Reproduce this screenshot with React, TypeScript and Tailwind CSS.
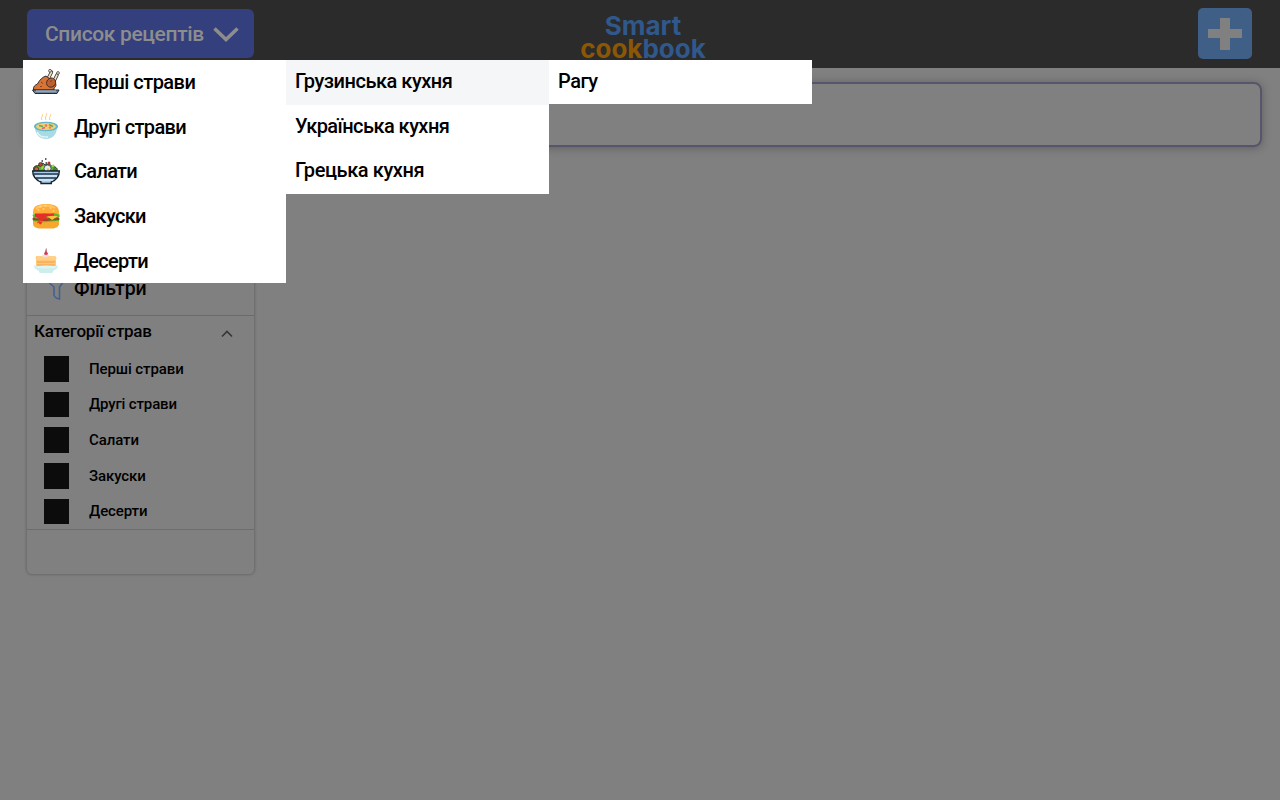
import React from "react";

const dishes = [
  { name: "Перші страви", icon: <Roast />, menu: "tracking-[-0.54px]", filter: "tracking-[-0.1px]" },
  { name: "Другі страви", icon: <Soup />, menu: "tracking-[-0.62px]", filter: "tracking-[-0.15px]" },
  { name: "Салати", icon: <Salad />, menu: "tracking-[-0.7px]", filter: "tracking-[-0.1px]" },
  { name: "Закуски", icon: <Burger />, menu: "tracking-[-0.68px]", filter: "tracking-[-0.1px]" },
  { name: "Десерти", icon: <Cake />, menu: "tracking-[-0.7px]", filter: "tracking-[-0.1px]" },
];
const cuisines = [
  { name: "Грузинська кухня", style: "bg-[#f5f6f8] tracking-[-0.47px]" },
  { name: "Українська кухня", style: "tracking-[-0.55px]" },
  { name: "Грецька кухня", style: "tracking-[-0.4px]" },
];

function Roast() {
  return (
    <svg viewBox="0 0 28 28" className="size-7">
      <path d="M16 11 19.500 4M22 13l3-6" stroke="#292c32" strokeWidth="3.4" strokeLinecap="round" />
      <path d="M16 11 19.500 4M22 13l3-6" stroke="#f0dfbb" strokeWidth="1.8" strokeLinecap="round" />
      <circle cx="18" cy="2.8" r="1.4" fill="#f6ead0" stroke="#292c32" strokeWidth=".7" />
      <circle cx="26" cy="5" r="1.4" fill="#f6ead0" stroke="#292c32" strokeWidth=".7" />
      <path d="M1.5 22c-.5-3.500 1.500-5 4-6 2-4 5-7 8.500-8l4 3 4 2c3 3 2 6 0 7v2Z" fill="#da7434" stroke="#392c2b" />
      <path d="M15 13c2-4 7-4 8.500 0 1 4-3 7-6 6-3-1-3.500-4-2.500-6Z" fill="#bc6030" stroke="#392c2b" />
      <path d="m9 14 2 1.500m-3 3h2m8-5 2-1" stroke="#733720" strokeWidth=".8" />
      <path d="M.5 22h26.500l-2 3.500H3Z" fill="#718499" stroke="#242b36" />
      <path d="M4 23h20" stroke="#b4c5d3" />
    </svg>
  );
}

function Soup() {
  return (
    <svg viewBox="0 0 28 28" className="size-7">
      <path d="M10 1c2 2-2 3 0 6m4-7c2 2-2 4 0 7m4-6c2 2-2 3 0 6" fill="none" stroke="#ffcb7b" />
      <path d="M3 14c0 8 5 12 11 12s11-4 11-12Z" fill="#a9dbe4" />
      <ellipse cx="14" cy="13.500" rx="12" ry="4.800" fill="#62b7c9" />
      <ellipse cx="14" cy="13.500" rx="10" ry="3.500" fill="#f3cf6e" />
      <path d="m7 12.500 4 1m6-2 4 2" stroke="#60a76b" strokeWidth="1.500" />
      <circle cx="14" cy="12.500" r="1.300" fill="#ee6f73" />
      <circle cx="18" cy="14.500" r="1.200" fill="#ef8060" />
      <path d="m10 15.500 3-1" stroke="#e45f72" strokeWidth="1.500" />
      <path d="M5 19c2 5 6 5 11 5" fill="none" stroke="#e4f5f7" strokeWidth="1.500" />
    </svg>
  );
}

function Salad() {
  return (
    <svg viewBox="0 0 28 28" className="size-7">
      <path d="M2 14c-2-4 2-6 4-5 2-3 5-4 7-1 3-2 7 0 7 2 3-1 6 1 5 4Z" fill="#64ad31" stroke="#20272b" />
      <circle cx="4.500" cy="12" r="2.200" fill="#d65b2e" stroke="#282626" strokeWidth=".7" />
      <circle cx="8.500" cy="7.500" r="2" fill="#c93737" stroke="#282626" strokeWidth=".6" />
      <circle cx="15.500" cy="11.500" r="3.500" fill="#e5edf3" stroke="#273443" strokeWidth=".7" />
      <circle cx="16" cy="12.500" r="1.200" fill="#efbc3d" />
      <path d="m20 10 2-2m-12 4 1-3" stroke="#8be02c" strokeWidth="2.200" />
      <circle cx="22.500" cy="12.500" r="1.600" fill="#3e7e28" />
      <circle cx="17" cy="6" r="1.500" fill="#b53636" />
      <path d="M9.500 4h1.500m2-2h1.500m-1 4H15" stroke="#30333a" strokeWidth="1.400" />
      <path d="M.7 14h26.600c0 6-3 9-8 11v1.500H9V25c-5-2-8.300-5-8.300-11Z" fill="#a7cce9" stroke="#17222e" strokeWidth="1.400" />
      <path d="M1.500 17h25M4 21h20" stroke="#263647" strokeWidth="1.300" />
      <path d="M3 19h22M7 23h14" stroke="#d4e7f8" strokeWidth="1.500" />
    </svg>
  );
}

function Burger() {
  return (
    <svg viewBox="0 0 28 28" className="size-7">
      <path d="M1 19h26v3c0 3-4 4.500-7 4.500H8c-3 0-7-1.500-7-4.500Z" fill="#f7a82c" />
      <path d="M1 10C1 4 6 2 14 2s13 2 13 8v2H1Z" fill="#ffad38" />
      <path d="M4 7c3-4 13-5 19-1" fill="none" stroke="#ffc662" strokeWidth="2" />
      <path d="M8 5h1m4-1h1m4 2h1m-8 1h1m9 2h1M6 8h1" stroke="#ffe6a9" strokeLinecap="round" />
      <rect x=".5" y="15" width="27" height="4" rx="2" fill="#954622" />
      <path d="M.5 13c3-3 5 2 9-1 4-2 6 1 10 0 4-2 6 1 8 0v3c-4 1-5 2-9 1-5 1-7 1-11 0-3 1-6 1-7-3Z" fill="#62b62e" />
      <path d="m15 14 5 4 6-4Z" fill="#ffc43b" />
      <path d="M3 11.500h19v2l-4 .5-4 .5 2 3-4-1-2 4c-1 3-3 2-3 0l-2 1 2-5-4-2Z" fill="#e72c29" />
      <path d="M1 18.500c4 1 6 0 8 1s9-1 18-1" fill="none" stroke="#66ae2e" />
    </svg>
  );
}

function Cake() {
  return (
    <svg viewBox="0 0 28 28" className="size-7">
      <path d="M5 9h17c2 0 3 2 2 4v7H4v-8c-1-2 0-3 1-3Z" fill="#ffc777" />
      <path d="M5 9h17c3 0 3 5 0 4-3-1-3 1-6 0-2-1-4 0-6 0s-3 1-6-1Z" fill="#ffd08a" />
      <path d="M5 15h18M5 18h18" stroke="#f3a04a" />
      <path d="M10 8h8l-3 2h-4Z" fill="#f2dfdb" />
      <path d="m14 3 2.200 4c-1.500 1.300-3 1.300-4.400 0Z" fill="#d93b51" />
      <path d="m14 4 .3-2.500" stroke="#79484e" strokeWidth=".8" />
      <path d="M2 18.500c5 1 18 1 24 0 0 4-4 4-5 6 0 1-1 1.500-2 1.500H9c-1 0-2-.5-2-1.500-1-2-5-2-5-6Z" fill="#cceeed" />
      <ellipse cx="14" cy="20" rx="11" ry="1.400" fill="#e0f4f1" />
    </svg>
  );
}

function Header() {
  return (
    <header className="flex h-[68px] items-start justify-between bg-[#2b2b2b] pl-[27px] pr-7">
      <button className="mt-[9px] flex h-[49px] w-[227px] items-center rounded-[6px] bg-[#343f7d] pl-[18px] text-[#8d8d8d]">
        <span className="w-[168px] whitespace-nowrap pt-0.5 text-left text-[21px] font-medium tracking-[-0.35px]">Список рецептів</span>
        <svg viewBox="0 0 26 16" className="mt-px h-4 w-[26px] shrink-0" fill="none" stroke="currentColor" strokeWidth="3.6">
          <path d="m1.500 2.500 11.500 11 11.500-11" />
        </svg>
      </button>
      <div className="mr-[166px] mt-[14px] w-[126px] whitespace-nowrap text-center font-['Inter',sans-serif] text-[26px] font-bold leading-[23px] text-[#30588b]">
        <div>Smart</div>
        <div className="flex justify-center"><span className="text-[#8c5704]">cook</span><span>book</span></div>
      </div>
      <button className="mt-2 flex h-[51px] w-[54px] items-center justify-center rounded-[5px] bg-[#405f86]">
        <svg viewBox="0 0 34 32" className="h-8 w-[34px]" fill="#808080">
          <path d="M12 0h10v11h12v9H22v12H12V20H0v-9h12Z" />
        </svg>
      </button>
    </header>
  );
}

function Filters() {
  return (
    <aside className="mt-[113px] flex h-[315px] w-[229px] flex-col rounded-[6px] border border-[#707070] shadow-[0_0_2px_rgba(70,70,70,0.5)]">
      <div className="flex h-[55px] items-center border-b border-[#6b6b6b]">
        <svg viewBox="0 0 28 28" className="ml-[14px] size-7" fill="none" stroke="#405f91" strokeWidth="1.5">
          <path d="M2 3h24l-7.500 10v12q-5-1-5.500-4v-8Z" />
        </svg>
        <h2 className="ml-[5px] pt-0.5 text-[19.5px] font-medium tracking-[-0.1px]">Фільтри</h2>
      </div>
      <section className="h-[214px] border-b border-[#6d6d6d]">
        <div className="flex h-[35px] items-center justify-between pb-1 pl-[7px] pr-[21px]">
          <h3 className="text-[17px] font-medium tracking-[-0.28px]">Категорії страв</h3>
          <svg viewBox="0 0 12 8" className="mt-1 h-2 w-3" fill="none" stroke="#363636" strokeWidth="1.6">
            <path d="m1 6.500 5-5 5 5" />
          </svg>
        </div>
        {dishes.map((dish) => (
          <div key={dish.name} className="flex h-[35.7px] items-center pl-[16.5px]">
            <span className="size-[25.5px] bg-[#0c0c0c]" />
            <span className={`ml-5 text-[15px] font-medium ${dish.filter}`}>{dish.name}</span>
          </div>
        ))}
      </section>
    </aside>
  );
}

function RecipeMenu() {
  return (
    <nav className="absolute left-[23px] top-[60px] flex items-start text-[20px] font-medium text-black">
      <ul className="w-[263px] bg-white">
        {dishes.map((dish) => (
          <li key={dish.name} className="flex h-[44.6px] items-center pl-[9px]">
            {dish.icon}
            <span className={`ml-[14px] ${dish.menu}`}>{dish.name}</span>
          </li>
        ))}
      </ul>
      <ul className="w-[263px] bg-white">
        {cuisines.map((cuisine) => (
          <li key={cuisine.name} className={`flex h-[44.6px] items-center pb-0.5 pl-[9px] ${cuisine.style}`}>
            {cuisine.name}
          </li>
        ))}
      </ul>
      <div className="flex h-[44.4px] w-[262.5px] items-center bg-white pb-0.5 pl-[9px] tracking-[-0.5px]">Рагу</div>
    </nav>
  );
}

export default function App() {
  return (
    <div className="relative h-[800px] w-[1280px] overflow-hidden bg-[#808080] font-['Roboto',sans-serif] text-black">
      <Header />
      <main className="flex flex-col pl-[26px] pr-[18px] pt-[14px]">
        <div className="h-[65px] rounded-[8px] border-2 border-[#57546b] shadow-[0_1px_8px_rgba(50,50,55,0.45)]" />
        <Filters />
      </main>
      <RecipeMenu />
    </div>
  );
}
